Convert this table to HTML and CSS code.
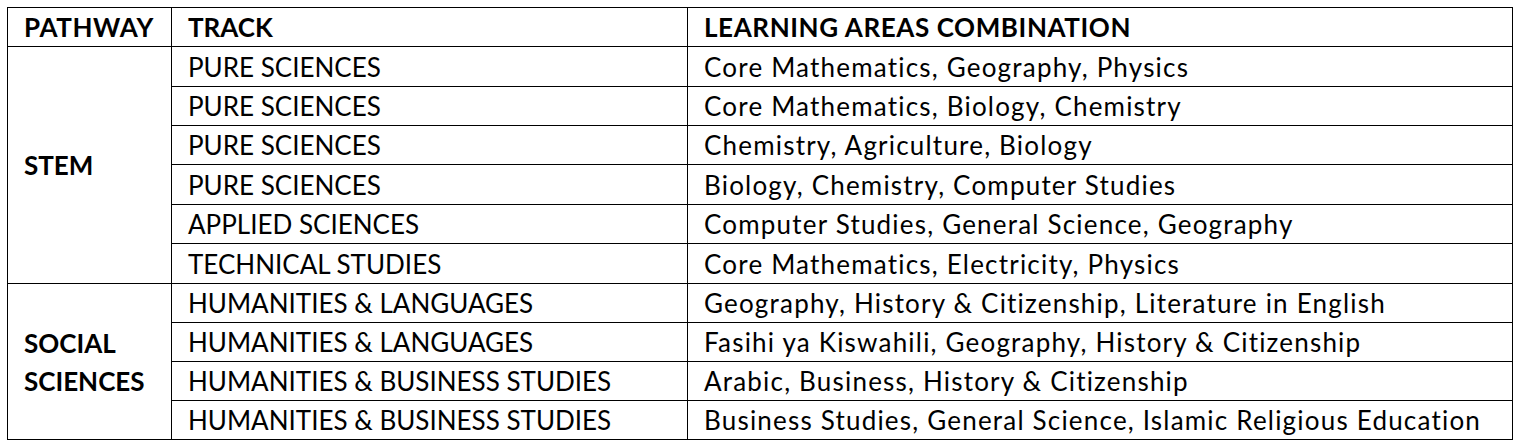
FILE: index.html
```html
<!DOCTYPE html>
<html>
<head>
<meta charset="utf-8">
<link rel="stylesheet" href="styles.css">
</head>
<body>
<table class="grid">
  <colgroup>
    <col class="c1"><col class="c2"><col class="c3">
  </colgroup>
  <thead>
    <tr class="r39"><th class="wide">PATHWAY</th><th>TRACK</th><th class="wide">LEARNING AREAS COMBINATION</th></tr>
  </thead>
  <tbody>
    <tr class="r40"><td class="path" rowspan="6">STEM</td><td>PURE SCIENCES</td><td class="combo">Core Mathematics, Geography, Physics</td></tr>
    <tr class="r39"><td>PURE SCIENCES</td><td class="combo">Core Mathematics, Biology, Chemistry</td></tr>
    <tr class="r39"><td>PURE SCIENCES</td><td class="combo">Chemistry, Agriculture, Biology</td></tr>
    <tr class="r40"><td>PURE SCIENCES</td><td class="combo">Biology, Chemistry, Computer Studies</td></tr>
    <tr class="r39"><td>APPLIED SCIENCES</td><td class="combo">Computer Studies, General Science, Geography</td></tr>
    <tr class="r40"><td>TECHNICAL STUDIES</td><td class="combo">Core Mathematics, Electricity, Physics</td></tr>
    <tr class="r39"><td class="path" rowspan="4">SOCIAL<br>SCIENCES</td><td>HUMANITIES &amp; LANGUAGES</td><td class="combo">Geography, History &amp; Citizenship, Literature in English</td></tr>
    <tr class="r39"><td>HUMANITIES &amp; LANGUAGES</td><td class="combo">Fasihi ya Kiswahili, Geography, History &amp; Citizenship</td></tr>
    <tr class="r39"><td>HUMANITIES &amp; BUSINESS STUDIES</td><td class="combo">Arabic, Business, History &amp; Citizenship</td></tr>
    <tr class="r39"><td>HUMANITIES &amp; BUSINESS STUDIES</td><td class="combo">Business Studies, General Science, Islamic Religious Education</td></tr>
  </tbody>
</table>
</body>
</html>
```
FILE: styles.css
```css
html, body {
  background: #ffffff;
}
body {
  margin: 7px 0 0 7px;
  font-family: Lato, "Liberation Sans", sans-serif;
  color: #000;
}
.grid {
  border-collapse: collapse;
  table-layout: fixed;
  width: 1505px;
}
.c1 { width: 164px; }
.c2 { width: 516px; }
.c3 { width: 825px; }
.grid th, .grid td {
  border: 1px solid #000;
  padding: 0 0 0 16px;
  font-size: 26px;
  line-height: 30px;
  text-align: left;
  vertical-align: middle;
  white-space: nowrap;
}
.grid th { font-weight: 700; }
.grid th.wide { letter-spacing: 0.6px; }
.grid td.path { font-weight: 700; line-height: 38px; }
.grid td.combo { letter-spacing: 1.2px; }
.r39 { height: 39px; }
.r40 { height: 40px; }
```
